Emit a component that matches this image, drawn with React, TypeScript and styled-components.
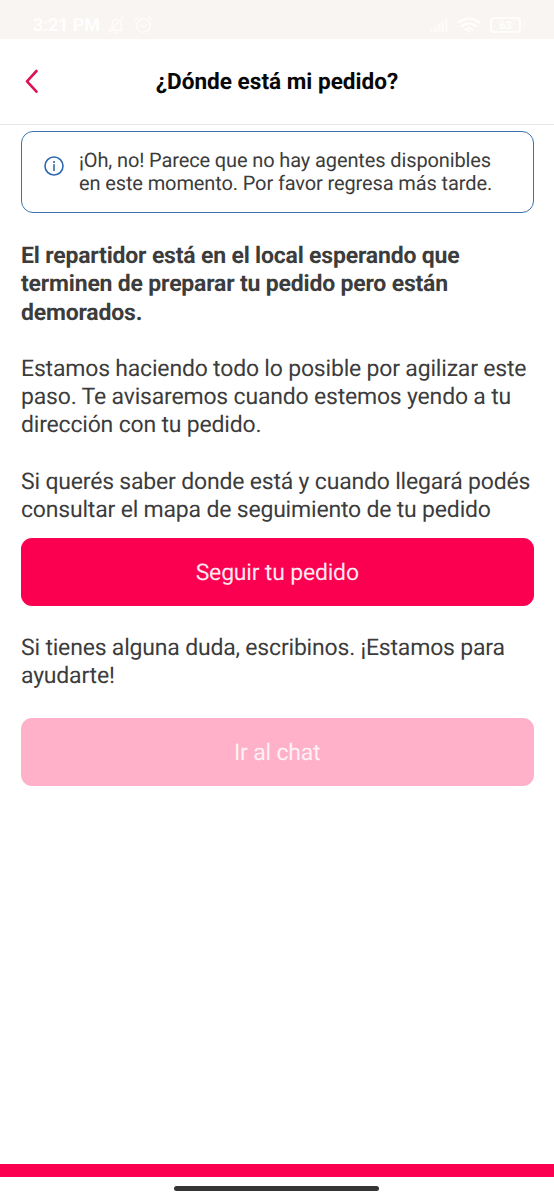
import React from "react";
import styled, { createGlobalStyle } from "styled-components";

const GlobalStyle = createGlobalStyle`
  * { box-sizing: border-box; }
  body {
    margin: 0;
    background: #fff;
    font-family: Roboto, "Open Sans", sans-serif;
    text-rendering: geometricPrecision;
  }
`;

const Screen = styled.div`
  display: flex;
  flex-direction: column;
  width: 554px;
  height: 1200px;
  background: #fff;
  overflow: hidden;
`;

const StatusBar = styled.div`
  display: flex;
  justify-content: space-between;
  height: 39px;
  padding: 10px 26px 0 33px;
  background: #f9f5f2;
  color: #fff;
`;

const StatusGroup = styled.div<{ $gap: number }>`
  display: flex;
  align-items: center;
  gap: ${(p) => p.$gap}px;
  height: 30px;
`;

const Clock = styled.span`
  font-size: 18px;
  font-weight: 600;
  letter-spacing: -0.1px;
`;

const FaintIcon = styled.svg`
  opacity: 0.75;
`;

const Header = styled.header`
  display: grid;
  grid-template-columns: 40px 1fr 40px;
  align-items: center;
  height: 86px;
  padding: 0 21px;
  border-bottom: 1px solid #e8e8e8;
`;

const BackButton = styled.button`
  display: flex;
  padding: 0 0 0 4px;
  border: 0;
  background: none;
`;

const Title = styled.h1`
  margin: 0;
  color: #080808;
  font-size: 22.6px;
  font-weight: 700;
  text-align: center;
  white-space: nowrap;
`;

const Content = styled.main`
  display: flex;
  flex-direction: column;
  flex: 1;
  padding: 6px 20.5px 0 21px;
`;

const Notice = styled.div`
  display: flex;
  gap: 15px;
  height: 82px;
  padding: 17px 0 0 22px;
  border: 1px solid #3a72b0;
  border-radius: 12px;
  color: #3c3c3c;
  font-size: 20px;
  letter-spacing: -0.12px;
  line-height: 23px;
  white-space: nowrap;
`;

const NoticeIcon = styled.svg`
  flex: none;
  margin-top: 7px;
`;

const Paragraph = styled.p<{ $top: number; $strong?: boolean }>`
  margin: ${(p) => p.$top}px 0 0;
  color: #3c3c3c;
  font-size: 23px;
  font-weight: ${(p) => (p.$strong ? 700 : 400)};
  letter-spacing: -0.19px;
  line-height: 28.2px;
  white-space: nowrap;
`;

const Action = styled.button<{ $top: number; $disabled?: boolean }>`
  flex: none;
  height: 67.5px;
  margin-top: ${(p) => p.$top}px;
  padding: 1px 0 0;
  border: 0;
  border-radius: 11px;
  background: ${(p) => (p.$disabled ? "#ffb1c9" : "#fb0050")};
  color: ${(p) => (p.$disabled ? "#fff1f5" : "#ffe8f0")};
  font-family: inherit;
  font-size: 23px;
  letter-spacing: -0.19px;
  text-rendering: inherit;
`;

const BottomBar = styled.div`
  height: 13px;
  background: #fb0050;
`;

const GestureArea = styled.div`
  display: flex;
  justify-content: center;
  height: 23px;
  padding: 9px 1px 0 0;
`;

const GestureHandle = styled.div`
  width: 205px;
  height: 5px;
  border-radius: 3px;
  background: #353535;
`;

const stroke = { fill: "none", stroke: "currentColor", strokeLinecap: "round", strokeLinejoin: "round" } as const;

export default function App() {
  return (
    <>
      <GlobalStyle />
      <Screen>
        <StatusBar>
          <StatusGroup $gap={8.5}>
            <Clock>3:21 PM</Clock>
            <FaintIcon width="17" height="18" viewBox="0 0 17 18" strokeWidth="1.5" {...stroke}>
              <path d="M2 14h13M4 13V8a4.500 4.500 0 0 1 9 0v5M7 16.500h3M1 16L15 1" />
            </FaintIcon>
            <FaintIcon width="19" height="18" viewBox="0 0 19 18" strokeWidth="1.6" {...stroke}>
              <circle cx="9.500" cy="9.500" r="6.700" />
              <path d="M1 4l3-3M18 4l-3-3M6.500 9l3 2 3-2" />
            </FaintIcon>
          </StatusGroup>
          <StatusGroup $gap={9}>
            <svg width="18" height="16" viewBox="0 0 18 16" fill="currentColor">
              <rect x="0" y="12" width="2.500" height="3" opacity="0.6" />
              <rect x="4" y="9.500" width="2.500" height="5.500" opacity="0.6" />
              <rect x="8" y="7" width="2.500" height="8" opacity="0.6" />
              <rect x="11.500" y="4" width="2.500" height="11" opacity="0.6" />
              <rect x="15" y="1" width="2.500" height="14" opacity="0.6" />
            </svg>
            <svg width="24" height="17" viewBox="0 0 24 17" strokeWidth="2.200" {...stroke}>
              <path d="M2 5q10-7 20 0M5 9q7-5 14 0M8.500 12.500q3.500-2.500 7 0" />
              <path d="M11.500 14.500h1" />
            </svg>
            <svg width="38" height="16" viewBox="0 0 38 16" strokeWidth="1.700" {...stroke}>
              <rect x="1" y="1" width="29" height="14" rx="3" />
              <path d="M34 6v4" opacity="0.5" />
              <text x="15.5" y="12" fill="currentColor" stroke="none" fontSize="11" fontWeight="700" textAnchor="middle">63</text>
            </svg>
          </StatusGroup>
        </StatusBar>
        <Header>
          <BackButton aria-label="Volver">
            <svg width="14" height="25" viewBox="0 0 14 25" strokeWidth="2.600" color="#dc1259" {...stroke}>
              <path d="M11.500 2L2 12.300L11.500 22.700" />
            </svg>
          </BackButton>
          <Title>¿Dónde está mi pedido?</Title>
        </Header>
        <Content>
          <Notice>
            <NoticeIcon width="20" height="20" viewBox="0 0 20 20" fill="none" stroke="#2e68b0" strokeWidth="1.600">
              <circle cx="10" cy="10" r="9" />
              <path d="M10 8.300v6.700M10 5v1.900" />
            </NoticeIcon>
            <div>
              ¡Oh, no! Parece que no hay agentes disponibles
              <br />
              en este momento. Por favor regresa más tarde.
            </div>
          </Notice>
          <Paragraph $top={29.2} $strong>
            El repartidor está en el local esperando que
            <br />
            terminen de preparar tu pedido pero están
            <br />
            demorados.
          </Paragraph>
          <Paragraph $top={28.2}>
            Estamos haciendo todo lo posible por agilizar este
            <br />
            paso. Te avisaremos cuando estemos yendo a tu
            <br />
            dirección con tu pedido.
          </Paragraph>
          <Paragraph $top={28.2}>
            Si querés saber donde está y cuando llegará podés
            <br />
            consultar el mapa de seguimiento de tu pedido
          </Paragraph>
          <Action $top={13.9}>Seguir tu pedido</Action>
          <Paragraph $top={28.5}>
            Si tienes alguna duda, escribinos. ¡Estamos para
            <br />
            ayudarte!
          </Paragraph>
          <Action $top={28} $disabled>
            Ir al chat
          </Action>
        </Content>
        <BottomBar />
        <GestureArea>
          <GestureHandle />
        </GestureArea>
      </Screen>
    </>
  );
}
